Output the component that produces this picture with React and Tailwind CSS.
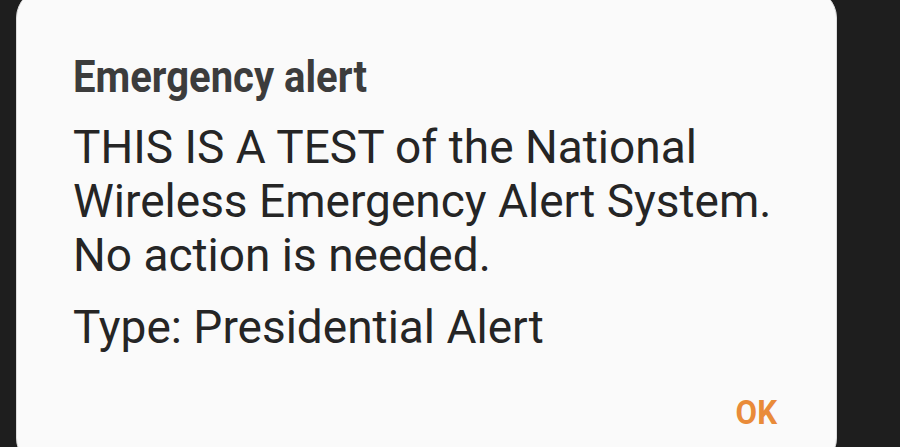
export default function App() {
  return (
    <div className="w-[900px] h-[447px] overflow-hidden bg-[#1e1e1e]" style={{ fontFamily: "Roboto, 'Noto Sans', sans-serif" }}>
      <div className="ml-[16px] mt-[-12px] w-[821px] h-[480px] bg-[#fafafa] rounded-[30px] border border-[#dcdcdc] pl-[56px] pr-[40px] pt-[61px]">
        <div className="origin-left scale-x-[0.89] text-[45px] leading-[54px] font-bold text-[#3c3c3c] whitespace-nowrap">Emergency alert</div>
        <div className="mt-[16px] text-[46px] leading-[54px] text-[#252525]">
          <p>THIS IS A TEST of the National<br />Wireless Emergency Alert System.<br />No action is needed.</p>
          <p className="mt-[18px]">Type: Presidential Alert</p>
        </div>
        <div className="flex justify-end pr-[19px] mt-[38px]">
          <span className="origin-right scale-x-[0.92] text-[34px] leading-[40px] font-bold text-[#e98b39]">OK</span>
        </div>
      </div>
    </div>
  );
}
